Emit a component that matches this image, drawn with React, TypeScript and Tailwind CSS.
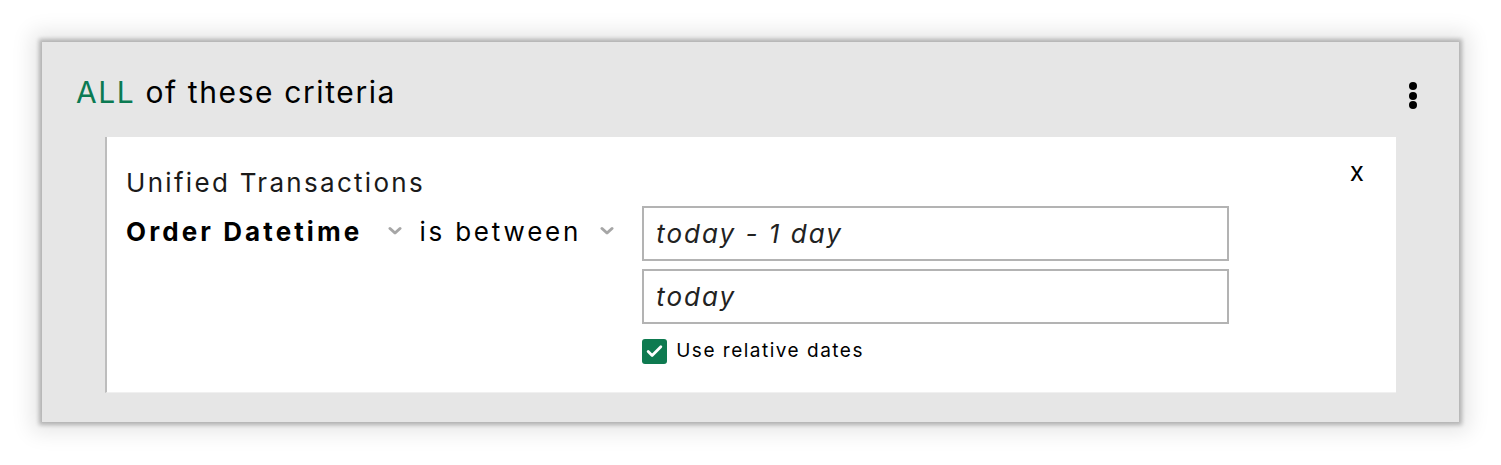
import { Check } from "lucide-react";

const font = { fontFamily: "Inter, 'Open Sans', sans-serif" };

const Chevron = () => (
  <svg width="14" height="10" viewBox="0 0 14 10" className="shrink-0">
    <path d="M2 2.5 L7 7 L12 2.5" fill="none" stroke="#a6a6a6" strokeWidth="3" strokeLinecap="round" strokeLinejoin="round" />
  </svg>
);

const Kebab = () => (
  <div className="flex flex-col gap-[1.5px] items-center mt-[6px]">
    <span className="w-2 h-2 rounded-full bg-black" />
    <span className="w-2 h-2 rounded-full bg-black" />
    <span className="w-2 h-2 rounded-full bg-black" />
  </div>
);

const DateInput = ({ value }: { value: string }) => (
  <div className="h-[55px] w-[587px] border-2 border-[#b3b3b3] flex items-center px-[12px] text-[26px] italic tracking-[2px] text-[#222]">
    {value}
  </div>
);

export default function App() {
  return (
    <div className="bg-white p-[42px] w-[1501px] h-[465px]" style={font}>
      <div className="bg-[#e6e6e6] h-[380px] shadow-[0_0_4px_3px_rgba(0,0,0,0.24),0_0_20px_10px_rgba(0,0,0,0.1)] flex flex-col">
        <div className="h-[95px] flex items-center justify-between pl-[34px] pr-[42px] pt-[6px]">
          <h2 className="text-[30px] tracking-[1.6px] text-black font-normal">
            <span className="text-[#0b7a52]">ALL</span> of these criteria
          </h2>
          <Kebab />
        </div>
        <div className="mx-[63px] h-[256px] bg-white border-l-2 border-[#bdbdbd] border-b border-b-[#f0f0f0] flex pl-[19px] pr-[32px] pt-[26px]">
          <div className="flex-1 flex flex-col">
            <div className="text-[26px] tracking-[2.3px] text-[#1a1a1a] leading-[40px]">Unified Transactions</div>
            <div className="flex items-start mt-[2px]">
              <div className="flex items-center h-[52px] gap-[26px]">
                <span className="text-[26px] font-bold tracking-[3.1px] text-black">Order Datetime</span>
                <Chevron />
              </div>
              <div className="flex items-center h-[52px] gap-[19px] ml-[17px]">
                <span className="text-[26px] tracking-[2.8px] text-black">is between</span>
                <Chevron />
              </div>
              <div className="flex flex-col gap-[8px] ml-[28px] mt-[1px]">
                <DateInput value="today - 1 day" />
                <DateInput value="today" />
                <label className="flex items-center gap-[9px] mt-[5px] text-[19px] tracking-[1.5px] text-black">
                  <span className="w-[25px] h-[25px] rounded-[3px] bg-[#0e7a50] flex items-center justify-center">
                    <Check className="w-[19px] h-[19px] text-white" strokeWidth={3.5} />
                  </span>
                  Use relative dates
                </label>
              </div>
            </div>
          </div>
          <button className="text-[26px] leading-none text-black h-fit -mt-[4px]">x</button>
        </div>
      </div>
    </div>
  );
}
